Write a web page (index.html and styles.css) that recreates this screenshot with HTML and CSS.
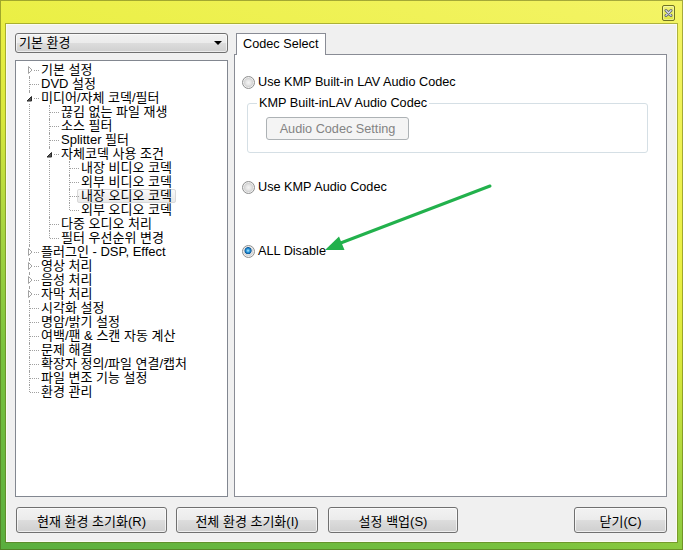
FILE: index.html
```html
<!DOCTYPE html>
<html lang="ko">
<head>
<meta charset="utf-8">
<title>환경 설정</title>
<link rel="stylesheet" href="styles.css">
</head>
<body>
<div class="window">
  <div class="titlebar">
    <div class="close">
      <svg width="11" height="14" viewBox="0 0 11 14">
        <path d="M3 4.5 L8 9.5 M8 4.5 L3 9.5" stroke="#5c6270" stroke-width="3" stroke-linecap="round" fill="none"/>
        <path d="M3 4.5 L8 9.5 M8 4.5 L3 9.5" stroke="#d4d8e2" stroke-width="1.3" stroke-linecap="round" fill="none"/>
      </svg>
    </div>
  </div>
  <div class="content">
    <div class="main">
      <div class="left">
        <div class="combo"><span>기본 환경</span><i class="caret"></i></div>
        <div class="treebox">
          <ul class="tree">
            <li><div class="row"><span class="exp"><svg width="8" height="10" viewBox="0 0 8 10"><polygon points="3.5,1.5 7,5 3.5,8.5" fill="#fff" stroke="#a2a2a2"/></svg></span><span class="label">기본 설정</span></div></li>
            <li><div class="row"><span class="label">DVD 설정</span></div></li>
            <li><div class="row"><span class="exp"><svg width="8" height="10" viewBox="0 0 8 10"><polygon points="6.5,3.5 6.5,8 2,8" fill="#555" stroke="#2a2a2a" stroke-linejoin="round"/></svg></span><span class="label">미디어/자체 코덱/필터</span></div>
              <ul>
                <li><div class="row"><span class="label">끊김 없는 파일 재생</span></div></li>
                <li><div class="row"><span class="label">소스 필터</span></div></li>
                <li><div class="row"><span class="label">Splitter 필터</span></div></li>
                <li><div class="row"><span class="exp"><svg width="8" height="10" viewBox="0 0 8 10"><polygon points="6.5,3.5 6.5,8 2,8" fill="#555" stroke="#2a2a2a" stroke-linejoin="round"/></svg></span><span class="label">자체코덱 사용 조건</span></div>
                  <ul>
                    <li><div class="row"><span class="label">내장 비디오 코덱</span></div></li>
                    <li><div class="row"><span class="label">외부 비디오 코덱</span></div></li>
                    <li><div class="row"><span class="label selected">내장 오디오 코덱</span></div></li>
                    <li class="last"><div class="row"><span class="label">외부 오디오 코덱</span></div></li>
                  </ul>
                </li>
                <li><div class="row"><span class="label">다중 오디오 처리</span></div></li>
                <li class="last"><div class="row"><span class="label">필터 우선순위 변경</span></div></li>
              </ul>
            </li>
            <li><div class="row"><span class="exp"><svg width="8" height="10" viewBox="0 0 8 10"><polygon points="3.5,1.5 7,5 3.5,8.5" fill="#fff" stroke="#a2a2a2"/></svg></span><span class="label">플러그인 - DSP, Effect</span></div></li>
            <li><div class="row"><span class="exp"><svg width="8" height="10" viewBox="0 0 8 10"><polygon points="3.5,1.5 7,5 3.5,8.5" fill="#fff" stroke="#a2a2a2"/></svg></span><span class="label">영상 처리</span></div></li>
            <li><div class="row"><span class="exp"><svg width="8" height="10" viewBox="0 0 8 10"><polygon points="3.5,1.5 7,5 3.5,8.5" fill="#fff" stroke="#a2a2a2"/></svg></span><span class="label">음성 처리</span></div></li>
            <li><div class="row"><span class="exp"><svg width="8" height="10" viewBox="0 0 8 10"><polygon points="3.5,1.5 7,5 3.5,8.5" fill="#fff" stroke="#a2a2a2"/></svg></span><span class="label">자막 처리</span></div></li>
            <li><div class="row"><span class="label">시각화 설정</span></div></li>
            <li><div class="row"><span class="label">명암/밝기 설정</span></div></li>
            <li><div class="row"><span class="label">여백/팬 &amp; 스캔 자동 계산</span></div></li>
            <li><div class="row"><span class="label">문제 해결</span></div></li>
            <li><div class="row"><span class="label">확장자 정의/파일 연결/캡처</span></div></li>
            <li><div class="row"><span class="label">파일 변조 기능 설정</span></div></li>
            <li class="last"><div class="row"><span class="label">환경 관리</span></div></li>
          </ul>
        </div>
      </div>
      <div class="right">
        <div class="tabs"><div class="tab">Codec Select</div></div>
        <div class="panel">
          <div class="opt"><span class="radio"></span><span>Use KMP Built-in LAV Audio Codec</span></div>
          <fieldset class="group">
            <legend>KMP Built-inLAV Audio Codec</legend>
            <button class="btn disabled" type="button">Audio Codec Setting</button>
          </fieldset>
          <div class="opt opt2"><span class="radio"></span><span>Use KMP Audio Codec</span></div>
          <div class="opt opt3"><span class="radio on"></span><span>ALL Disable</span></div>
        </div>
      </div>
    </div>
    <div class="actions">
      <button class="btn b1" type="button">현재 환경 초기화(R)</button>
      <button class="btn b2" type="button">전체 환경 초기화(I)</button>
      <button class="btn b3" type="button">설정 백업(S)</button>
      <button class="btn b4" type="button">닫기(C)</button>
    </div>
  </div>
  <svg class="annot" width="683" height="550" viewBox="0 0 683 550">
    <line x1="490" y1="186" x2="338" y2="244" stroke="#22b14c" stroke-width="3" stroke-linecap="round"/>
    <polygon points="325,250 339,236.5 344.5,250" fill="#22b14c"/>
  </svg>
</div>
</body>
</html>
```

FILE: styles.css
```css
* { box-sizing: border-box; }

body {
  margin: 0;
  font-family: "Liberation Sans", "Noto Sans CJK KR", sans-serif;
  font-size: 13px;
  color: #000;
}

.window {
  position: relative;
  width: 683px;
  height: 550px;
  display: flex;
  flex-direction: column;
  padding: 0 6px 8px;
  background: linear-gradient(200deg, #f4f466 0%, #eaef44 34%, #d8e73c 46%, #a6d440 60%, #7ac23e 75%, #5aae3e 100%);
  box-shadow: inset 0 0 0 1px rgba(70, 80, 10, 0.45);
}

.titlebar {
  height: 24px;
  flex: none;
  display: flex;
  justify-content: flex-end;
  align-items: flex-start;
  padding: 5px 2px 0 0;
}

.close {
  width: 13px;
  height: 16px;
  border: 1px solid #6f7322;
  border-radius: 2px;
  background: linear-gradient(#eef27a, #dfe640);
  box-shadow: inset 0 0 0 1px rgba(255, 255, 255, 0.35);
  display: flex;
  align-items: center;
  justify-content: center;
}

.content {
  flex: 1;
  background: #f0f0f0;
  border: 1px solid #fbfbf2;
  box-shadow: 0 0 0 1px rgba(90, 100, 20, 0.45);
  padding: 8px 9px 8px 8px;
  display: flex;
  flex-direction: column;
}

.main {
  height: 464px;
  flex: none;
  display: flex;
  gap: 6px;
}

.left {
  width: 213px;
  flex: none;
  display: flex;
  flex-direction: column;
  gap: 7px;
}

.combo {
  height: 20px;
  flex: none;
  border: 1px solid #707070;
  border-radius: 3px;
  background: linear-gradient(#f2f2f2 0%, #ebebeb 50%, #dddddd 50%, #cfcfcf 100%);
  box-shadow: inset 0 0 0 1px rgba(255, 255, 255, 0.6);
  display: flex;
  align-items: center;
  justify-content: space-between;
  padding: 0 5px 0 3px;
  line-height: 18px;
}

.caret {
  width: 0;
  height: 0;
  border-left: 4px solid transparent;
  border-right: 4px solid transparent;
  border-top: 4px solid #000;
}

.treebox {
  flex: 1;
  border: 1px solid #828790;
  background: #fff;
  padding-top: 2px;
  overflow: hidden;
}

.tree, .tree ul {
  list-style: none;
  margin: 0;
  padding: 0;
}

.tree ul { padding-left: 20px; }

.tree li { position: relative; }

.tree li::before {
  content: "";
  position: absolute;
  left: 13px;
  top: 0;
  bottom: 0;
  border-left: 1px dotted #a0a0a0;
}

.tree > li:first-child::before { top: 7px; }

.tree li.last::before {
  bottom: auto;
  height: 7px;
}

.row {
  position: relative;
  height: 14px;
  line-height: 14px;
  padding-left: 25px;
  white-space: nowrap;
}

.row::before {
  content: "";
  position: absolute;
  left: 14px;
  top: 7px;
  width: 9px;
  border-top: 1px dotted #a0a0a0;
}

.exp {
  position: absolute;
  left: 9px;
  top: 2px;
  width: 8px;
  height: 10px;
  background: #fff;
  z-index: 1;
}

.exp svg { display: block; }

.label {
  display: inline-block;
  height: 14px;
  line-height: 12px;
  padding: 0 3px;
  margin-left: -4px;
  border: 1px solid transparent;
  border-radius: 2px;
}

.label.selected {
  border-color: #d9d9d9;
  background: linear-gradient(#fafafa, #e8e8e8);
}

.right {
  flex: 1;
  display: flex;
  flex-direction: column;
}

.tabs {
  height: 21px;
  flex: none;
  display: flex;
  align-items: flex-end;
  padding-left: 2px;
}

.tab {
  position: relative;
  z-index: 1;
  height: 22px;
  margin-bottom: -1px;
  border: 1px solid #898c95;
  border-bottom: none;
  background: #fff;
  padding: 0 7px 0 6px;
  line-height: 20px;
  font-size: 12.7px;
}

.panel {
  flex: 1;
  border: 1px solid #898c95;
  background: #fff;
  padding: 20px 0 0 7px;
  font-size: 12.7px;
}

.opt {
  display: flex;
  align-items: center;
  gap: 3px;
  height: 14px;
  line-height: 14px;
}

.opt2 { margin-top: 27px; }
.opt3 { margin-top: 50px; }

.radio {
  width: 13px;
  height: 13px;
  flex: none;
  border-radius: 50%;
  border: 1px solid #8e8f8f;
  background: radial-gradient(circle at 50% 50%, #f4f4f4 0, #e6e6e6 2.5px, #cfcfcf 4.5px, #ececec 5.5px);
  box-shadow: inset 0 0 0 1px rgba(255, 255, 255, 0.5);
}

.radio.on {
  background:
    radial-gradient(circle at 46% 42%, #b6ecff 0, #2a98dc 1.8px, #0d5a9c 3.2px, rgba(13, 90, 156, 0) 3.9px),
    radial-gradient(circle at 50% 50%, #f4f4f4 0, #e6e6e6 2.5px, #cfcfcf 4.5px, #ececec 5.5px);
}

.group {
  margin: 7px 0 0 5px;
  width: 401px;
  min-width: 0;
  border: 1px solid #d5dfe5;
  border-radius: 3px;
  padding: 0 0 12px 9px;
}

.group legend {
  padding: 0 2px;
  line-height: 14px;
  height: 14px;
}

.btn {
  display: block;
  height: 26px;
  padding: 0;
  border: 1px solid #707070;
  border-radius: 3px;
  background: linear-gradient(#f2f2f2 0%, #ebebeb 50%, #dddddd 50%, #cfcfcf 100%);
  box-shadow: inset 0 0 0 1px rgba(255, 255, 255, 0.65);
  font-family: "Liberation Sans", "Noto Sans CJK KR", sans-serif;
  font-size: 13px;
  color: #000;
}

.btn.disabled {
  margin: 7px 0 0 9px;
  width: 143px;
  height: 23px;
  border-color: #adb2b5;
  background: #f4f4f4;
  box-shadow: none;
  color: #838383;
  font-size: 12.7px;
}

.actions {
  margin-top: 10px;
  height: 26px;
  flex: none;
  display: flex;
  padding-left: 1px;
}

.b1 { width: 151px; }
.b2 { width: 142px; margin-left: 9px; }
.b3 { width: 130px; margin-left: 10px; }
.b4 { width: 93px; margin-left: auto; }

.annot {
  position: absolute;
  left: 0;
  top: 0;
  pointer-events: none;
}
```
